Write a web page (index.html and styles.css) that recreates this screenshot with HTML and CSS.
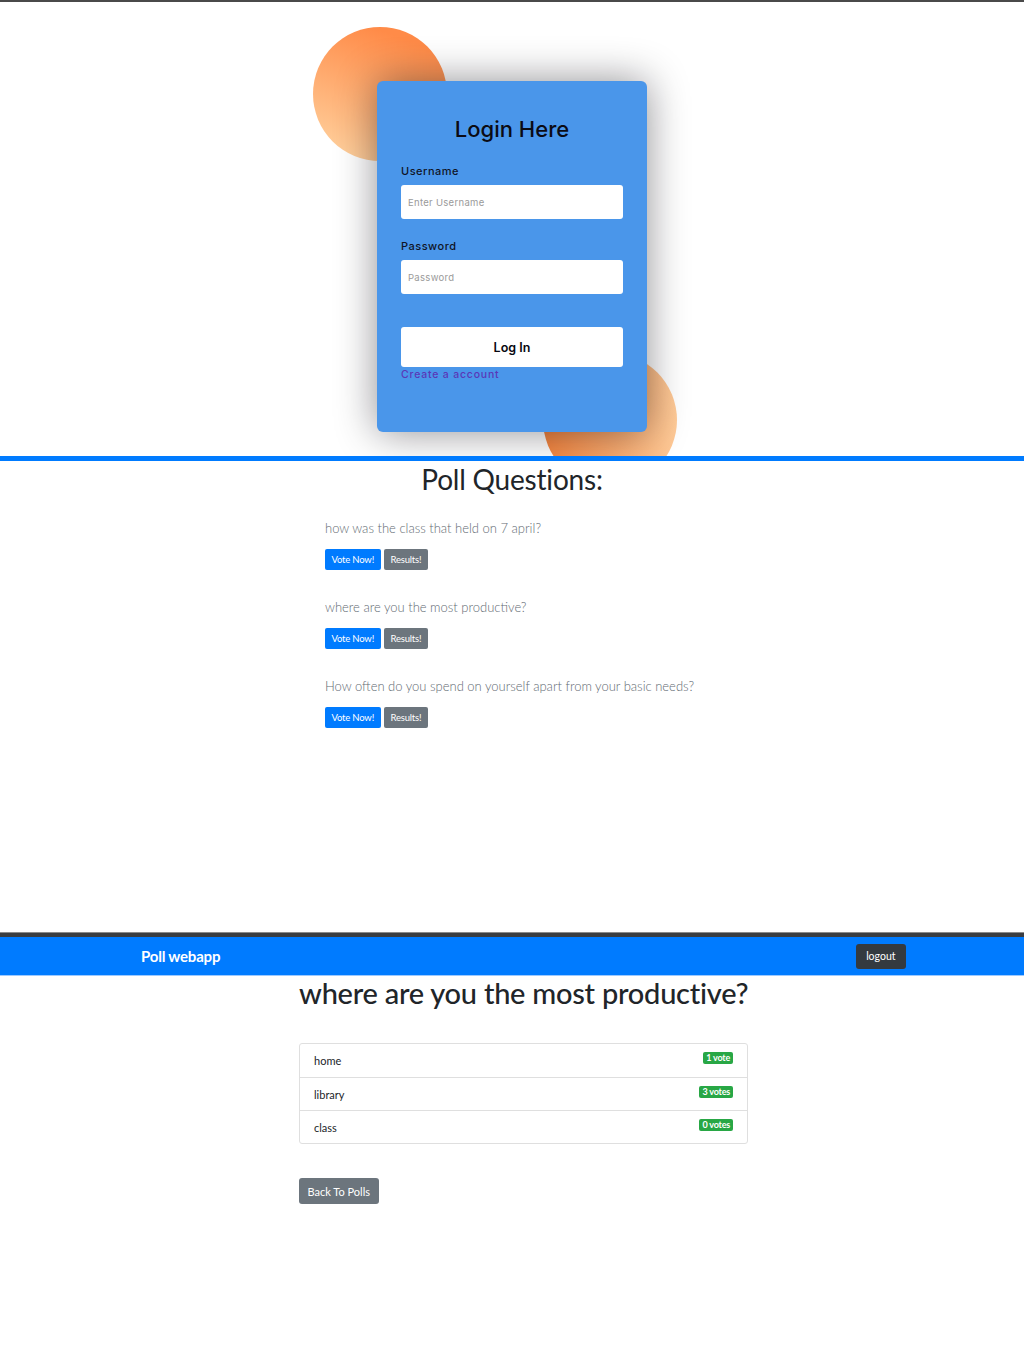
FILE: index.html
```html
<!DOCTYPE html>
<html lang="en">
<head>
<meta charset="utf-8">
<title>Poll webapp</title>
<link rel="stylesheet" href="styles.css">
</head>
<body>
<section class="login-page">
  <div class="login-wrap">
    <span class="shape shape-a"></span>
    <span class="shape shape-b"></span>
    <form class="login-card">
      <h3 class="login-title">Login Here</h3>
      <label class="login-label" for="username">Username</label>
      <input class="login-input" id="username" type="text" placeholder="Enter Username">
      <label class="login-label" for="password">Password</label>
      <input class="login-input" id="password" type="password" placeholder="Password">
      <button class="login-btn" type="button">Log In</button>
      <a class="login-link" href="#">Create a account</a>
    </form>
  </div>
</section>

<section class="polls-page">
  <h1 class="polls-title">Poll Questions:</h1>
  <div class="polls-list">
    <div class="poll">
      <p class="poll-q">how was the class that held on 7 april?</p>
      <div class="poll-actions"><a class="btn btn-primary" href="#">Vote Now!</a><a class="btn btn-secondary" href="#">Results!</a></div>
    </div>
    <div class="poll">
      <p class="poll-q">where are you the most productive?</p>
      <div class="poll-actions"><a class="btn btn-primary" href="#">Vote Now!</a><a class="btn btn-secondary" href="#">Results!</a></div>
    </div>
    <div class="poll">
      <p class="poll-q">How often do you spend on yourself apart from your basic needs?</p>
      <div class="poll-actions"><a class="btn btn-primary" href="#">Vote Now!</a><a class="btn btn-secondary" href="#">Results!</a></div>
    </div>
  </div>
</section>

<section class="results-page">
  <div class="tabstrip"></div>
  <nav class="navbar">
    <a class="brand" href="#">Poll webapp</a>
    <a class="logout" href="#">logout</a>
  </nav>
  <div class="results">
    <h2 class="results-title">where are you the most productive?</h2>
    <ul class="list-group">
      <li class="list-item">home<span class="badge">1 vote</span></li>
      <li class="list-item">library<span class="badge">3 votes</span></li>
      <li class="list-item">class<span class="badge">0 votes</span></li>
    </ul>
    <a class="back-btn" href="#">Back To Polls</a>
  </div>
</section>
</body>
</html>
```

FILE: styles.css
```css
* { box-sizing: border-box; }

body {
  margin: 0;
  background: #fff;
  font-family: "Lato", "Noto Sans", sans-serif;
}

/* ---------- login ---------- */
.login-page {
  height: 456px;
  border-top: 2px solid #4a4a4a;
  overflow: hidden;
}

.login-wrap {
  position: relative;
  width: 270px;
  margin: 79px auto 0;
}

.shape {
  position: absolute;
  width: 134px;
  height: 134px;
  border-radius: 50%;
}

.shape-a {
  left: -64px;
  top: -54px;
  background: linear-gradient(200deg, #ff8b48 15%, #ffd29f 95%);
}

.shape-b {
  left: 166px;
  top: 272px;
  background: linear-gradient(to right, #f4853f, #ffcb98);
}

.login-card {
  position: relative;
  display: flex;
  flex-direction: column;
  height: 351px;
  padding: 32px 24px 0;
  background: #4a96ea;
  border-radius: 6px;
  box-shadow: 0 0 40px rgba(8, 7, 16, 0.45);
  font-family: "Inter", "Noto Sans", sans-serif;
}

.login-title {
  margin: 0 0 18px;
  text-align: center;
  font-size: 22px;
  font-weight: 500;
  line-height: 32px;
  color: #0b0b14;
}

.login-label {
  font-size: 11px;
  font-weight: 500;
  letter-spacing: 0.5px;
  color: #101426;
  line-height: 16px;
  margin-bottom: 6px;
}

.login-input {
  height: 34px;
  margin-bottom: 19px;
  padding: 0 7px;
  border: none;
  border-radius: 3px;
  background: #fff;
  font-family: inherit;
  font-size: 9.5px;
  color: #333;
}

.login-input::placeholder { color: #9a9a9a; letter-spacing: 0.3px; }

.login-btn {
  height: 40px;
  margin-top: 14px;
  border: none;
  border-radius: 3px;
  background: #fff;
  font-family: inherit;
  font-size: 12.5px;
  font-weight: 600;
  color: #080710;
}

.login-link {
  margin-top: 1px;
  font-size: 10.5px;
  font-weight: 500;
  letter-spacing: 0.8px;
  line-height: 14px;
  color: #5a37b8;
  text-decoration: none;
}

/* ---------- polls ---------- */
.polls-page {
  height: 476px;
  border-top: 5px solid #007bff;
  font-family: "Lato", sans-serif;
}

.polls-title {
  margin: 0;
  text-align: center;
  font-size: 28px;
  font-weight: 400;
  line-height: 36px;
  color: #212529;
  letter-spacing: -0.2px;
}

.polls-list {
  width: 374px;
  margin: 21px auto 0;
  display: flex;
  flex-direction: column;
  gap: 27px;
}

.poll-q {
  margin: 0 0 11px;
  font-size: 13px;
  font-weight: 300;
  line-height: 20px;
  color: #636b73;
  white-space: nowrap;
}

.poll-actions {
  display: flex;
  gap: 3px;
}

.btn {
  display: inline-flex;
  align-items: center;
  height: 21px;
  padding: 0 6.5px;
  border-radius: 2px;
  font-size: 9.5px;
  color: #fff;
  text-decoration: none;
  letter-spacing: -0.2px;
}

.btn-primary { background: #007bff; }
.btn-secondary { background: #6c757d; padding: 0 7px; }

/* ---------- results ---------- */
.results-page {
  height: 434px;
  font-family: "Lato", sans-serif;
}

.tabstrip {
  height: 5px;
  background: #3a3d41;
  border-top: 1px solid #8a8a8a;
}

.navbar {
  display: flex;
  align-items: center;
  justify-content: space-between;
  height: 39px;
  padding: 0 118px 0 141px;
  background: #007bff;
  border-bottom: 1px solid #9cc9ff;
}

.brand {
  font-size: 15px;
  font-weight: 700;
  color: #fff;
  text-decoration: none;
  letter-spacing: -0.2px;
}

.logout {
  display: inline-flex;
  align-items: center;
  height: 25px;
  padding: 0 10.5px;
  background: #343a40;
  border-radius: 3px;
  font-size: 10.5px;
  color: #fff;
  text-decoration: none;
}

.results {
  width: 449px;
  margin-left: 299px;
}

.results-title {
  margin: 0;
  font-size: 29px;
  font-weight: 500;
  line-height: 34px;
  color: #212529;
  letter-spacing: -0.25px;
  white-space: nowrap;
}

.list-group {
  list-style: none;
  margin: 33px 0 0;
  padding: 0;
  border: 1px solid #dfdfdf;
  border-radius: 3px;
}

.list-item {
  position: relative;
  height: 33px;
  padding: 0 14px;
  display: flex;
  align-items: center;
  justify-content: space-between;
  font-size: 11px;
  color: #212529;
}

.list-item + .list-item { border-top: 1px solid #dfdfdf; }

.badge {
  align-self: flex-start;
  margin-top: 8px;
  padding: 0 3px;
  height: 12px;
  line-height: 12px;
  border-radius: 2px;
  background: #28a745;
  color: #fff;
  font-size: 9px;
  font-weight: 700;
  letter-spacing: -0.2px;
}

.back-btn {
  display: inline-flex;
  align-items: center;
  height: 26px;
  margin-top: 34px;
  padding: 0 8.5px;
  background: #6c757d;
  border-radius: 3px;
  font-size: 11px;
  color: #fff;
  text-decoration: none;
}
```
